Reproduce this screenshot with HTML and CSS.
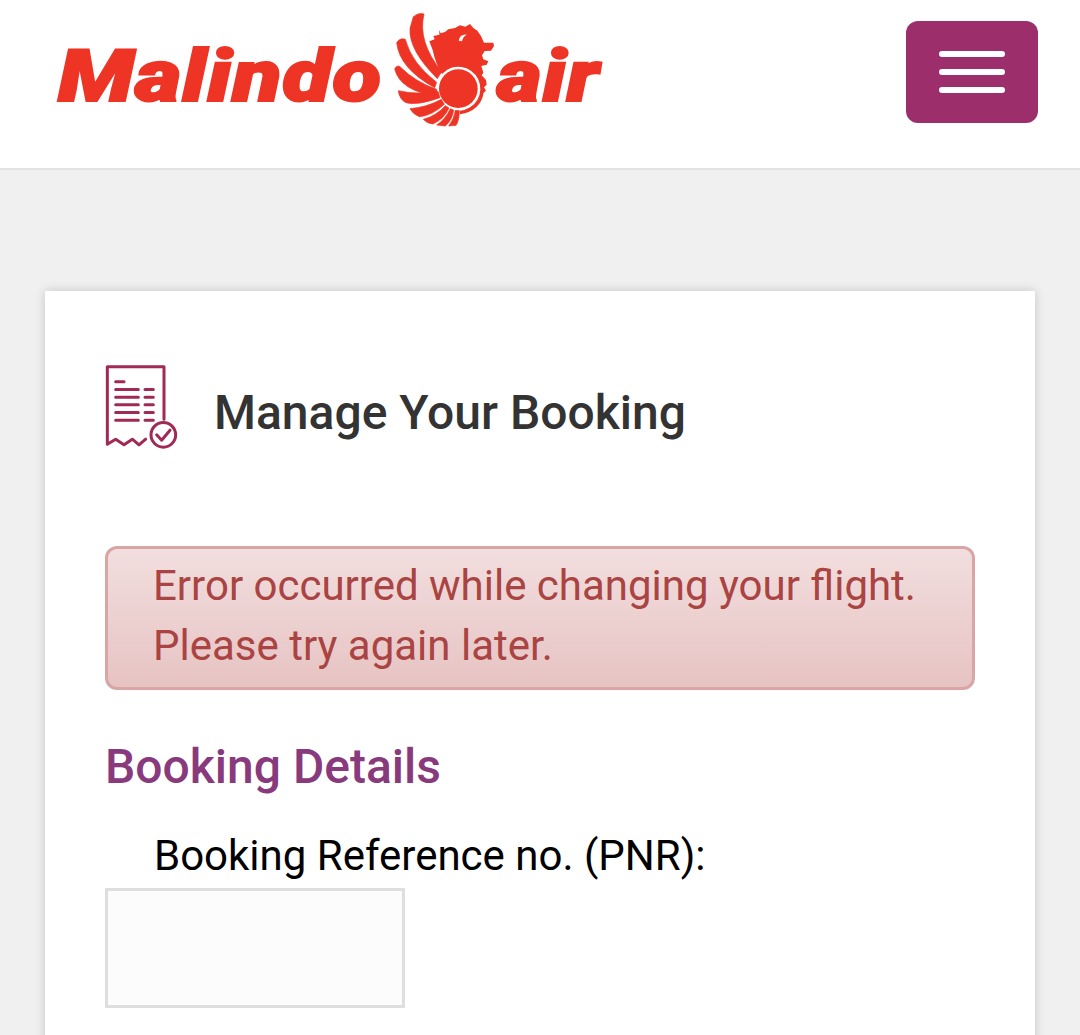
FILE: index.html
```html
<!DOCTYPE html>
<html lang="en">
<head>
<meta charset="utf-8">
<title>Manage Your Booking</title>
<link rel="stylesheet" href="styles.css">
</head>
<body>
<header class="site-header">
  <div class="logo">
    <span class="logo-word logo-malindo">Malindo</span>
    <svg class="logo-lion" viewBox="0 0 390 390" aria-hidden="true">
      <path class="wing" d="M100 50Q118 36 132 42Q112 125 185 215L172 236Q85 150 90 85Z"/>
      <path class="wing" d="M50 128Q60 112 76 118Q95 190 170 247L164 263Q58 205 50 128Z"/>
      <path class="wing" d="M44 207Q50 194 60 200Q105 245 170 268L170 289Q60 272 44 207Z"/>
      <path class="wing" d="M55 272Q112 285 174 274L180 293Q110 318 78 308Q58 298 55 272Z"/>
      <path class="wing" d="M90 326Q140 322 184 298L193 313Q155 348 118 350Q98 342 90 326Z"/>
      <path class="wing" d="M130 358Q168 348 196 317L207 324Q192 358 158 372Q140 370 130 358Z"/>
      <path class="wing" d="M170 375Q196 358 211 326L221 330Q216 362 196 378Z"/>
      <path class="wing" d="M206 378Q222 358 226 331L238 332Q238 362 228 376Z"/>
      <path class="lion" d="M178 90L182 100L195 96L205 88L225 84L240 76L256 80L270 72L280 84L292 92L303 108L312 128L340 128L342 138L333 152L314 153L306 166L310 178L325 184L320 194L304 198L310 218L305 226L318 240L320 254L312 262L318 272L311 278Q302 332 240 343L240 332A66 66 0 1 0 186 222Q166 190 158 150L148 124L164 118L160 108L178 104Z"/>
      <circle class="lion" cx="235" cy="266" r="58"/>
      <path class="lion-eye" d="M236 122Q240 102 260 104Q248 110 246 124Z"/>
    </svg>
    <span class="logo-word logo-air">air</span>
  </div>
  <button class="menu-toggle" type="button" aria-label="Menu">
    <span class="menu-bar"></span>
    <span class="menu-bar"></span>
    <span class="menu-bar"></span>
  </button>
</header>
<main class="page">
  <section class="card">
    <div class="card-title">
      <svg class="title-icon" viewBox="43 40 225 260" aria-hidden="true">
        <path d="M220 205V48H50V280L75 265L100 282L125 265L145 282L165 265"/>
        <path d="M75 93H100M75 116H143M163 116H188M75 139H143M163 139H188M75 162H143M163 162H188M75 185H143M163 185H188M75 208H143M163 208H188"/>
        <circle cx="218" cy="252" r="37"/>
        <path d="M198 252L213 268L238 238"/>
      </svg>
      <h1 class="title">Manage Your Booking</h1>
    </div>
    <div class="alert">Error occurred while changing your flight.<br>Please try again later.</div>
    <h2 class="section-title">Booking Details</h2>
    <label class="field-label" for="pnr">Booking Reference no. (PNR):</label>
    <input class="field-input" id="pnr" type="text">
  </section>
</main>
</body>
</html>
```
FILE: styles.css
```css
* { box-sizing: border-box; }
html, body { margin: 0; height: 1035px; overflow: hidden; }
body { background: #f0f0f0; font-family: Roboto, "Liberation Sans", sans-serif; }

.site-header {
  height: 170px;
  background: #fff;
  border-bottom: 2px solid #e2e2e2;
  display: flex;
  justify-content: space-between;
  align-items: flex-start;
  padding: 0 42px 0 58px;
}
.logo { display: flex; align-items: flex-start; color: #ee3424; }
.logo-word {
  font-family: Roboto, sans-serif;
  font-weight: 900;
  font-style: italic;
  font-size: 72px;
  line-height: 72px;
  margin-top: 41px;
  -webkit-text-stroke: 2px #ee3424;
  display: block;
  transform-origin: left top;
}
.logo-malindo { width: 322px; flex: none; letter-spacing: 1px; transform: scaleX(1.24); }
.logo-air { width: 106px; flex: none; margin-left: -13px; letter-spacing: 1px; transform: scaleX(1.2); }
.logo-lion { width: 130px; height: 130px; flex: none; }
.lion { fill: #ee3424; }
.wing { fill: #ee3424; stroke: #ee3424; stroke-width: 2; }
.lion-eye { fill: #fff; }

.menu-toggle {
  width: 132px;
  height: 102px;
  margin-top: 21px;
  padding: 0;
  border: 0;
  border-radius: 12px;
  background: #9c2f6b;
  display: flex;
  flex-direction: column;
  align-items: center;
  justify-content: center;
  gap: 12px;
}
.menu-bar { width: 66px; height: 6px; border-radius: 3px; background: #fff; }

.page { padding: 121px 45px 0; }
.card {
  background: #fff;
  min-height: 900px;
  padding: 73px 60px 0;
  box-shadow: 0 0 10px rgba(0, 0, 0, .18);
}
.card-title { display: flex; align-items: center; gap: 35px; height: 87px; }
.title-icon { width: 75px; height: 87px; flex: none; fill: none; stroke: #a02a55; stroke-width: 9; stroke-linecap: round; stroke-linejoin: round; }
.title { margin: 0 0 0 -1px; padding-top: 10px; font-size: 48px; line-height: 54px; font-weight: 500; color: #333; }

.alert {
  margin-top: 95px;
  padding: 7px 45px 11px;
  border: 3px solid #d9a6a6;
  border-radius: 12px;
  background: linear-gradient(#f2dede, #e7c3c3);
  color: #a94442;
  font-size: 42px;
  line-height: 60px;
}
.section-title { margin: 52px 0 0; font-size: 48px; line-height: 50px; font-weight: 500; color: #883a7c; }
.field-label { display: block; margin-top: 34px; padding-left: 49px; font-size: 42px; line-height: 60px; color: #000; }
.field-input {
  display: block;
  width: 300px;
  height: 120px;
  margin-top: 2px;
  background: #fcfcfc;
  border: 3px solid #dedede;
  border-radius: 0;
}
```
